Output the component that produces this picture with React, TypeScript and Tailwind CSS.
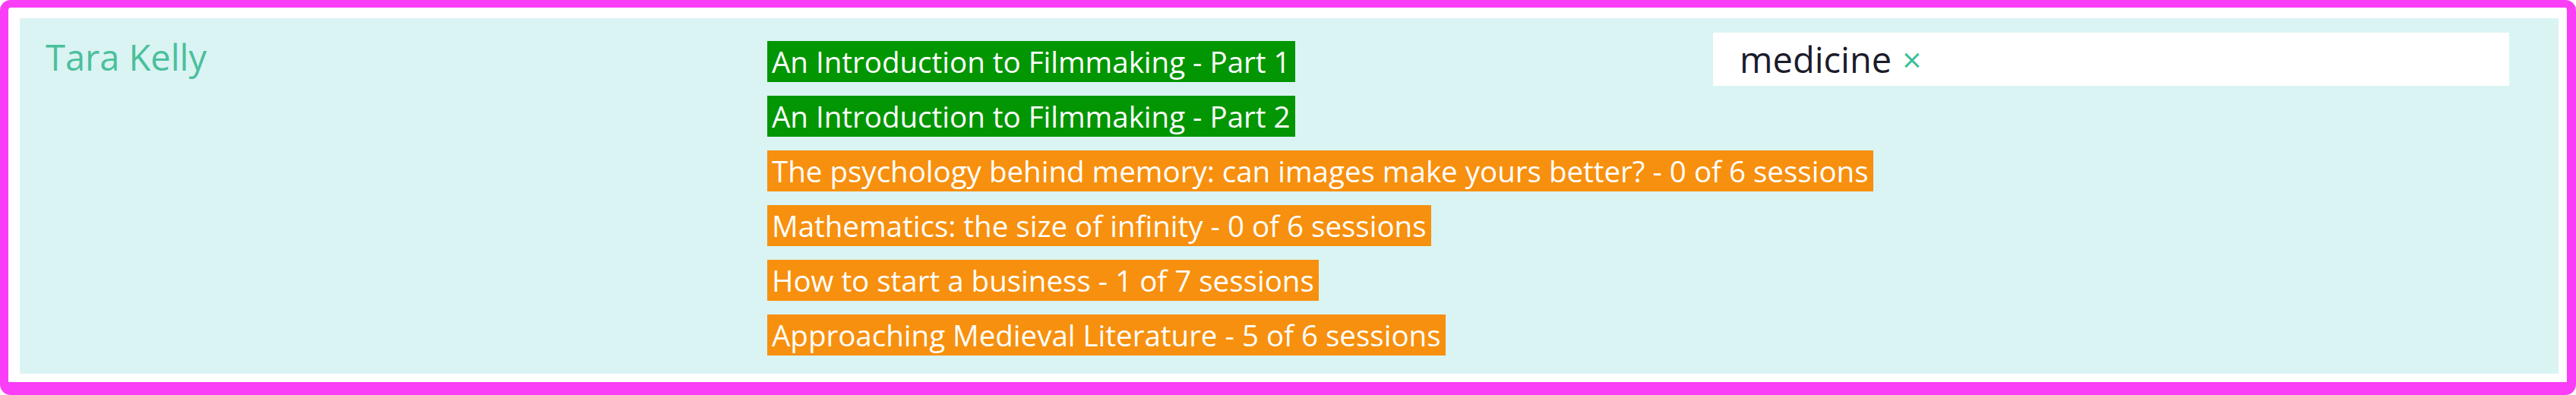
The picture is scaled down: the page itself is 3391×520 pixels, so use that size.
import React from 'react';

interface Course {
  title: string;
  done: boolean;
}

const courses: Course[] = [
  { title: 'An Introduction to Filmmaking - Part 1', done: true },
  { title: 'An Introduction to Filmmaking - Part 2', done: true },
  { title: 'The psychology behind memory: can images make yours better? - 0 of 6 sessions', done: false },
  { title: 'Mathematics: the size of infinity - 0 of 6 sessions', done: false },
  { title: 'How to start a business - 1 of 7 sessions', done: false },
  { title: 'Approaching Medieval Literature - 5 of 6 sessions', done: false },
];

function CourseBadge({ course }: { course: Course }) {
  return (
    <span
      className={
        course.done
          ? 'block whitespace-nowrap px-[6px] text-[38.5px] leading-[54px] text-white bg-[#029602]'
          : 'block whitespace-nowrap px-[6px] text-[38.5px] leading-[54px] text-white bg-[#f7900e]'
      }
    >
      {course.title}
    </span>
  );
}

export default function App() {
  const [tags, setTags] = React.useState<string[]>(['medicine']);

  return (
    <div
      className="h-[520px] w-full flex rounded-[14px] border-[#fa3ef8] border-t-[10px] border-b-[17px] border-l-[11px] border-r-[12px] bg-white pt-[14px] pl-[15px] pr-[11px] pb-[11px]"
      style={{ fontFamily: '"Open Sans", "Liberation Sans", sans-serif' }}
    >
      <div className="flex-1 min-w-0 flex bg-[#daf4f3] pl-[34px] pr-[65px]">
        <div className="w-[950px] shrink-0 pt-[20px] text-[47px] leading-[62px] text-[#4bbf9c]">Tara Kelly</div>

        <div className="flex-1 min-w-0 flex flex-col items-start gap-[18px] pt-[30px] pb-[23px]">
          {courses.map((c) => (
            <CourseBadge key={c.title} course={c} />
          ))}
        </div>

        <div className="w-[1048px] shrink-0 pt-[19px]">
          <div className="h-[70px] bg-white flex items-center px-[35px] gap-[12px]">
            {tags.map((t) => (
              <span key={t} className="flex items-center gap-[14px] text-[47px] leading-[60px] text-[#1b1b2b]">
                {t}
                <button
                  type="button"
                  onClick={() => setTags(tags.filter((x) => x !== t))}
                  className="text-[#3dbf98] text-[44px] leading-[60px]"
                >
                  ×
                </button>
              </span>
            ))}
          </div>
        </div>
      </div>
    </div>
  );
}
